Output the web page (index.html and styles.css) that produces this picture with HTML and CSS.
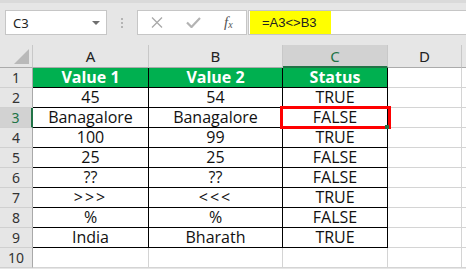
FILE: index.html
```html
<!DOCTYPE html>
<html lang="en">
<head>
<meta charset="UTF-8">
<title>Book1 - Excel</title>
<link rel="stylesheet" href="styles.css">
</head>
<body>

<!-- name box + formula bar -->
<div class="formula-row">
    <div class="name-box">
        <span class="ref">C3</span>
        <span class="caret"></span>
    </div>
    <div class="grip"><i></i><i></i><i></i></div>
    <div class="fx-buttons">
        <svg class="btn-x" width="12" height="11" viewBox="0 0 12 11"><path d="M1 0.5 L11 10.5 M11 0.5 L1 10.5" stroke="#a9a9a9" stroke-width="1.3" fill="none"/></svg>
        <svg class="btn-ok" width="15" height="11" viewBox="0 0 15 11"><path d="M1 5.5 L5.5 10 L14 1" stroke="#b3b3b3" stroke-width="2.2" fill="none"/></svg>
        <span class="fx">f<sub>x</sub></span>
    </div>
    <div class="formula">
        <span class="formula-text">=A3&lt;&gt;B3</span>
    </div>
</div>

<!-- worksheet grid -->
<div class="sheet">
    <div class="corner"><span class="tri"></span></div>
    <div class="col-hd">A</div>
    <div class="col-hd">B</div>
    <div class="col-hd sel">C</div>
    <div class="col-hd">D</div>
    <div class="col-hd last"></div>

    <div class="row-hd">1</div>
    <div class="cell tb head">Value 1</div>
    <div class="cell tb head">Value 2</div>
    <div class="cell tb head">Status</div>
    <div class="cell"></div>
    <div class="cell last"></div>

    <div class="row-hd">2</div>
    <div class="cell tb">45</div>
    <div class="cell tb">54</div>
    <div class="cell tb">TRUE</div>
    <div class="cell"></div>
    <div class="cell last"></div>

    <div class="row-hd sel">3</div>
    <div class="cell tb">Banagalore</div>
    <div class="cell tb">Banagalore</div>
    <div class="cell tb active">FALSE</div>
    <div class="cell"></div>
    <div class="cell last"></div>

    <div class="row-hd">4</div>
    <div class="cell tb">100</div>
    <div class="cell tb">99</div>
    <div class="cell tb">TRUE</div>
    <div class="cell"></div>
    <div class="cell last"></div>

    <div class="row-hd">5</div>
    <div class="cell tb">25</div>
    <div class="cell tb">25</div>
    <div class="cell tb">FALSE</div>
    <div class="cell"></div>
    <div class="cell last"></div>

    <div class="row-hd">6</div>
    <div class="cell tb">??</div>
    <div class="cell tb">??</div>
    <div class="cell tb">FALSE</div>
    <div class="cell"></div>
    <div class="cell last"></div>

    <div class="row-hd">7</div>
    <div class="cell tb sym">&gt;&gt;&gt;</div>
    <div class="cell tb sym">&lt;&lt;&lt;</div>
    <div class="cell tb">TRUE</div>
    <div class="cell"></div>
    <div class="cell last"></div>

    <div class="row-hd">8</div>
    <div class="cell tb">%</div>
    <div class="cell tb">%</div>
    <div class="cell tb">FALSE</div>
    <div class="cell"></div>
    <div class="cell last"></div>

    <div class="row-hd">9</div>
    <div class="cell tb">India</div>
    <div class="cell tb">Bharath</div>
    <div class="cell tb">TRUE</div>
    <div class="cell"></div>
    <div class="cell last"></div>

    <div class="row-hd">10</div>
    <div class="cell"></div>
    <div class="cell"></div>
    <div class="cell"></div>
    <div class="cell"></div>
    <div class="cell last"></div>
</div>

</body>
</html>
```

FILE: styles.css
```css
/* page */
body {
    margin: 0;
    background: #e6e6e6;
    font-family: "Noto Sans", "Liberation Sans", sans-serif;
    overflow: hidden;
}

/* formula bar */
.formula-row {
    display: flex;
    height: 45px;
    padding-top: 10px;
    box-sizing: border-box;
    border-top: 3px solid #dadada;
}
.name-box {
    margin-top: -3px;
    margin-left: 5px;
    width: 102px;
    height: 25px;
    box-sizing: border-box;
    background: #fff;
    border: 1px solid #c6c6c6;
    display: flex;
    align-items: center;
    justify-content: space-between;
    padding: 0 6px 0 7px;
}
.ref {
    font-size: 13px;
    color: #222;
}
.caret {
    width: 0;
    height: 0;
    border-left: 4px solid transparent;
    border-right: 4px solid transparent;
    border-top: 4px solid #6f6f6f;
}
.grip {
    margin-top: -3px;
    width: 30px;
    height: 25px;
    display: flex;
    flex-direction: column;
    align-items: center;
    justify-content: center;
    gap: 2px;
}
.grip i {
    width: 2px;
    height: 2px;
    background: #b4b4b4;
}
.fx-buttons {
    margin-top: -3px;
    width: 110px;
    height: 25px;
    box-sizing: border-box;
    background: #fff;
    border: 1px solid #c6c6c6;
    display: flex;
    align-items: center;
    padding-left: 13px;
}
.btn-x {
    margin-right: 23px;
}
.btn-ok {
    margin-right: 23px;
}
.fx {
    font-family: "Liberation Serif", serif;
    font-style: italic;
    font-size: 15px;
    color: #555;
    line-height: 1;
}
.fx sub {
    font-size: 10px;
    vertical-align: -1px;
}
.formula {
    margin-top: -3px;
    margin-left: 1px;
    flex: 1;
    height: 25px;
    box-sizing: border-box;
    background: #fff;
    border-top: 1px solid #c6c6c6;
    border-bottom: 1px solid #c6c6c6;
    border-left: 1px solid #c6c6c6;
    padding-left: 1px;
    display: flex;
}
.formula-text {
    width: 81px;
    box-sizing: border-box;
    background: #ffff00;
    font-family: "Liberation Sans", sans-serif;
    font-size: 13px;
    color: #222;
    padding-left: 12px;
    line-height: 23px;
}

/* worksheet */
.sheet {
    display: grid;
    grid-template-columns: 33px 116px 134px 105px 74px 4px;
    grid-template-rows: 23px repeat(10, 20px);
    background: #fff;
}
.sheet > div {
    box-sizing: border-box;
}
.corner {
    background: #e6e6e6;
    border-right: 1px solid #c8c8c8;
    border-bottom: 1px solid #ababab;
    position: relative;
}
.tri {
    position: absolute;
    right: 3px;
    bottom: 3px;
    width: 0;
    height: 0;
    border-left: 15px solid transparent;
    border-bottom: 15px solid #b9b9b9;
}
.col-hd {
    background: #e6e6e6;
    border-right: 1px solid #c8c8c8;
    border-bottom: 1px solid #ababab;
    text-align: center;
    font-size: 15px;
    line-height: 22px;
    color: #222;
}
.col-hd.sel {
    background: #d2d2d2;
    color: #217346;
    border-bottom: 2px solid #217346;
}
.row-hd {
    background: #e6e6e6;
    border-right: 1px solid #a9a9a9;
    border-bottom: 1px solid #d0d0d0;
    text-align: center;
    font-size: 14px;
    line-height: 19px;
    color: #333;
}
.row-hd.sel {
    background: #d2d2d2;
    color: #217346;
    border-right: 2px solid #217346;
}
.cell {
    border-right: 1px solid #d4d4d4;
    border-bottom: 1px solid #d4d4d4;
    text-align: center;
    font-family: "Open Sans", "Liberation Sans", sans-serif;
    font-size: 16px;
    line-height: 19px;
    color: #111;
}
.cell.sym {
    letter-spacing: 2px;
}
.last {
    border-right: none;
}
.cell.tb {
    border-right-color: #000;
    border-bottom-color: #000;
}
.cell.head {
    background: #00b050;
    color: #fff;
    font-weight: bold;
}

/* active cell outline */
.cell.active {
    position: relative;
}
.cell.active::before {
    content: '';
    position: absolute;
    left: -3px;
    top: -2px;
    width: 111px;
    height: 23px;
    box-sizing: border-box;
    border: 3px solid #ff0000;
}
.cell.active::after {
    content: '';
    position: absolute;
    right: -2px;
    bottom: -2px;
    width: 4px;
    height: 4px;
    background: #217346;
}
```
